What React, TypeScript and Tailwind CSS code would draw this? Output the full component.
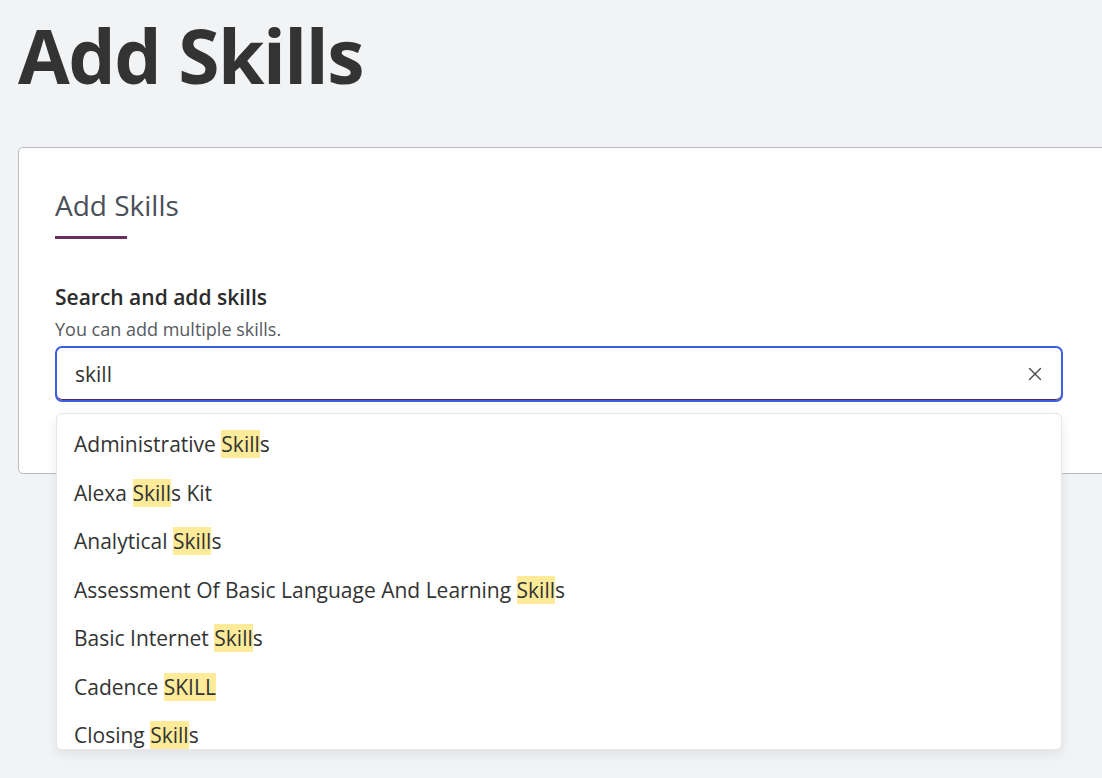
import { X } from "lucide-react";

const results: [string, string, string][] = [
  ["Administrative ", "Skill", "s"],
  ["Alexa ", "Skill", "s Kit"],
  ["Analytical ", "Skill", "s"],
  ["Assessment Of Basic Language And Learning ", "Skill", "s"],
  ["Basic Internet ", "Skill", "s"],
  ["Cadence ", "SKILL", ""],
  ["Closing ", "Skill", "s"],
];

export default function App() {
  return (
    <main className="min-h-[778px] w-full overflow-hidden bg-[#f2f3f5] font-['Open_Sans',sans-serif] text-[#333]">
      <div className="pl-[18px] pt-[3px]">
        <h1 className="text-[75px] font-bold leading-[104px] tracking-[-1.5px] text-[#333]">
          Add Skills
        </h1>

        <section className="mt-[40px] w-[1120px] rounded-[5px] border border-[#b8bcc3] bg-white pb-[71px] pl-[36px] pt-[38px]">
          <h2 className="text-[28px] font-normal leading-[38px] text-[#4a4f58]">
            Add Skills
          </h2>
          <div className="mt-[12px] h-[3px] w-[72px] bg-[#682f5a]" />

          <div className="mt-[44px] w-[1008px]">
            <label className="block text-[21px] font-semibold leading-[28px] text-[#2b2b2b]">
              Search and add skills
            </label>
            <p className="mt-[6px] text-[18px] leading-[24px] text-[#555a61]">
              You can add multiple skills.
            </p>

            <div className="relative mt-[5px]">
              <div className="flex h-[56px] items-center rounded-[7px] border-2 border-[#3c5fe0] pl-[18px] pr-[15px] shadow-[inset_0_-1px_0_#5b2c52]">
                <span className="flex-1 text-[21px] leading-[28px] text-[#333]">
                  skill
                </span>
                <X size={22} strokeWidth={1.5} className="text-[#4a4a4a]" />
              </div>

              <ul className="absolute left-[1px] top-[67px] z-10 h-[337px] w-[1006px] overflow-hidden rounded-[6px] border border-[#e6e7ea] bg-white pt-[6px] shadow-[0_4px_12px_rgba(0,0,0,0.08)]">
                {results.map(([pre, hit, post]) => (
                  <li
                    key={pre + post}
                    className="px-[17px] py-[10px] text-[21px] leading-[28.5px] text-[#333]"
                  >
                    {pre}
                    <mark className="bg-[#fdeb99] text-[#333]">{hit}</mark>
                    {post}
                  </li>
                ))}
              </ul>
            </div>
          </div>
        </section>
      </div>
    </main>
  );
}
